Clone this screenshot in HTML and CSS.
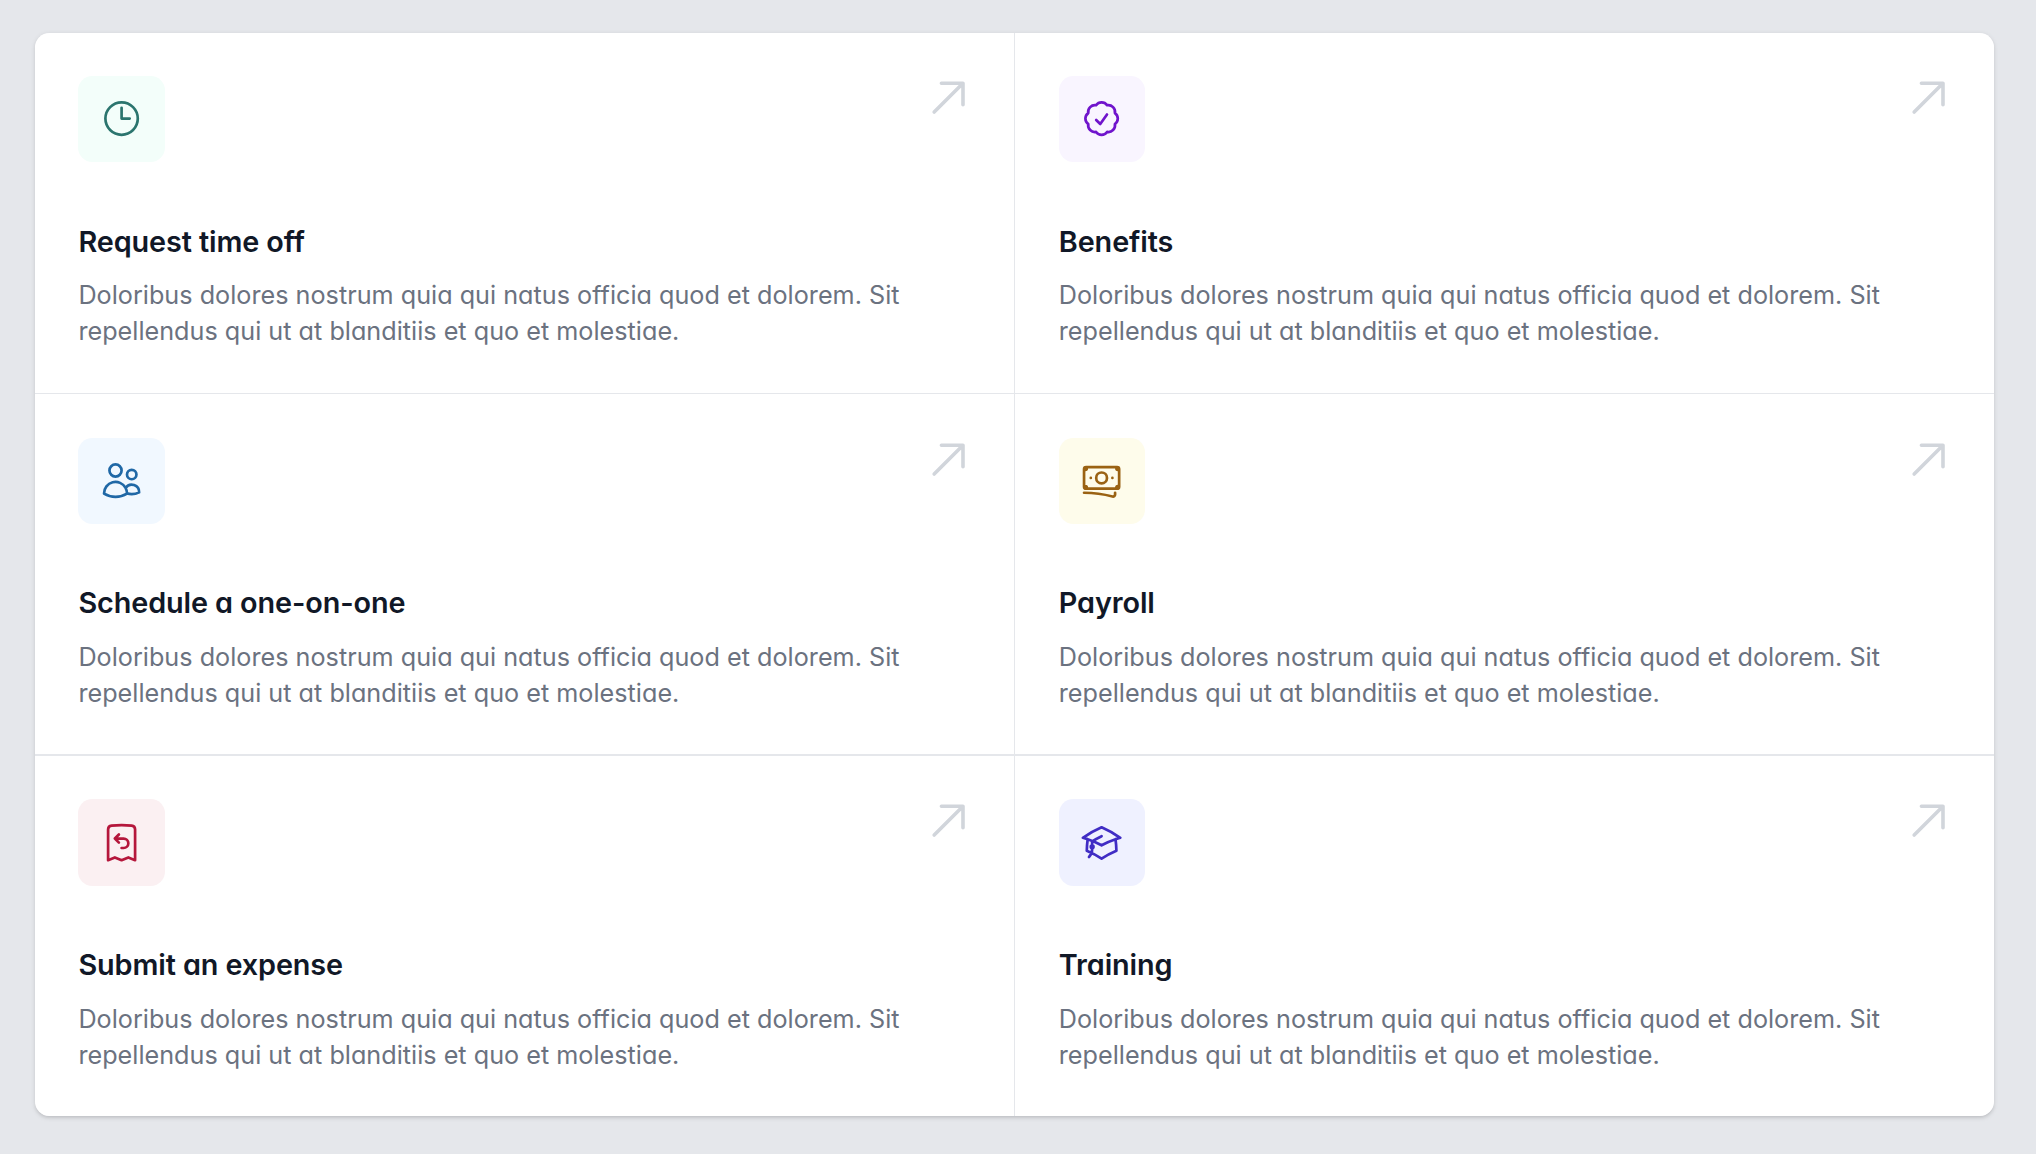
FILE: index.html
```html
<!DOCTYPE html>
<html lang="en">
<head>
<meta charset="utf-8">
<title>Quick actions</title>
<link rel="stylesheet" href="styles.css">
</head>
<body>
<svg width="0" height="0" class="sprite" aria-hidden="true">
  <symbol id="arrow" viewBox="0 0 24 24"><path d="M20 4h1a1 1 0 00-1-1v1zm-1 12a1 1 0 102 0h-2zM8 3a1 1 0 000 2V3zM3.293 19.293a1 1 0 101.414 1.414l-1.414-1.414zM19 4v12h2V4h-2zm1-1H8v2h12V3zm-.707.293l-16 16 1.414 1.414 16-16-1.414-1.414z"/></symbol>
</svg>
<main class="grid">
  <section class="card">
    <div class="top">
      <span class="badge teal"><svg class="icon" viewBox="0 0 24 24"><path d="M12 6v6h4.5m4.5 0a9 9 0 11-18 0 9 9 0 0118 0z"/></svg></span>
      <svg class="arrow"><use href="#arrow"/></svg>
    </div>
    <h3>Request time off</h3>
    <p>Doloribus dolores nostrum quia qui natus officia quod et dolorem. Sit repellendus qui ut at blanditiis et quo et molestiae.</p>
  </section>
  <section class="card">
    <div class="top">
      <span class="badge purple"><svg class="icon" viewBox="0 0 24 24"><path d="M9 12.75L11.25 15 15 9.75M21 12c0 1.268-.63 2.39-1.593 3.068a3.745 3.745 0 01-1.043 3.296 3.745 3.745 0 01-3.296 1.043A3.745 3.745 0 0112 21c-1.268 0-2.39-.63-3.068-1.593a3.746 3.746 0 01-3.296-1.043 3.745 3.745 0 01-1.043-3.296A3.745 3.745 0 013 12c0-1.268.63-2.39 1.593-3.068a3.745 3.745 0 011.043-3.296 3.746 3.746 0 013.296-1.043A3.746 3.746 0 0112 3c1.268 0 2.39.63 3.068 1.593a3.746 3.746 0 013.296 1.043 3.746 3.746 0 011.043 3.296A3.745 3.745 0 0121 12z"/></svg></span>
      <svg class="arrow"><use href="#arrow"/></svg>
    </div>
    <h3>Benefits</h3>
    <p>Doloribus dolores nostrum quia qui natus officia quod et dolorem. Sit repellendus qui ut at blanditiis et quo et molestiae.</p>
  </section>
  <section class="card">
    <div class="top">
      <span class="badge sky"><svg class="icon" viewBox="0 0 24 24"><path d="M15 19.128a9.38 9.38 0 002.625.372 9.337 9.337 0 004.121-.952 4.125 4.125 0 00-7.533-2.493M15 19.128v-.003c0-1.113-.285-2.16-.786-3.07M15 19.128v.106A12.318 12.318 0 018.624 21c-2.331 0-4.512-.645-6.374-1.766l-.001-.109a6.375 6.375 0 0111.964-3.07M12 6.375a3.375 3.375 0 11-6.75 0 3.375 3.375 0 016.75 0zm8.25 2.25a2.625 2.625 0 11-5.25 0 2.625 2.625 0 015.25 0z"/></svg></span>
      <svg class="arrow"><use href="#arrow"/></svg>
    </div>
    <h3>Schedule a one-on-one</h3>
    <p>Doloribus dolores nostrum quia qui natus officia quod et dolorem. Sit repellendus qui ut at blanditiis et quo et molestiae.</p>
  </section>
  <section class="card">
    <div class="top">
      <span class="badge yellow"><svg class="icon" viewBox="0 0 24 24"><path d="M2.25 18.75a60.07 60.07 0 0115.797 2.101c.727.198 1.453-.342 1.453-1.096V18.75M3.75 4.5v.75A.75.75 0 013 6h-.75m0 0v-.375c0-.621.504-1.125 1.125-1.125H20.25M2.25 6v9m18-10.5v.75c0 .414.336.75.75.75h.75m-1.5-1.5h.375c.621 0 1.125.504 1.125 1.125v9.75c0 .621-.504 1.125-1.125 1.125h-.375m1.5-1.5H21a.75.75 0 00-.75.75v.75m0 0H3.75m0 0h-.375a1.125 1.125 0 01-1.125-1.125V15m1.5 1.5v-.75A.75.75 0 003 15h-.75M15 10.5a3 3 0 11-6 0 3 3 0 016 0zm3 0h.008v.008H18V10.5zm-12 0h.008v.008H6V10.5z"/></svg></span>
      <svg class="arrow"><use href="#arrow"/></svg>
    </div>
    <h3>Payroll</h3>
    <p>Doloribus dolores nostrum quia qui natus officia quod et dolorem. Sit repellendus qui ut at blanditiis et quo et molestiae.</p>
  </section>
  <section class="card">
    <div class="top">
      <span class="badge rose"><svg class="icon" viewBox="0 0 24 24"><path d="M8.25 9.75h4.875a2.625 2.625 0 010 5.25H12M8.25 9.75L10.5 7.5M8.25 9.75L10.5 12m9-7.243V21.75l-3.75-1.5-3.75 1.5-3.75-1.5-3.75 1.5V4.757c0-1.108.806-2.057 1.907-2.185a48.507 48.507 0 0111.186 0c1.1.128 1.907 1.077 1.907 2.185z"/></svg></span>
      <svg class="arrow"><use href="#arrow"/></svg>
    </div>
    <h3>Submit an expense</h3>
    <p>Doloribus dolores nostrum quia qui natus officia quod et dolorem. Sit repellendus qui ut at blanditiis et quo et molestiae.</p>
  </section>
  <section class="card">
    <div class="top">
      <span class="badge indigo"><svg class="icon" viewBox="0 0 24 24"><path d="M4.26 10.147a60.436 60.436 0 00-.491 6.347A48.627 48.627 0 0112 20.904a48.627 48.627 0 018.232-4.41 60.46 60.46 0 00-.491-6.347m-15.482 0a50.57 50.57 0 00-2.658-.813A59.905 59.905 0 0112 3.493a59.902 59.902 0 0110.399 5.84c-.896.248-1.783.52-2.658.814m-15.482 0A50.697 50.697 0 0112 13.489a50.702 50.702 0 017.74-3.342M6.75 15a.75.75 0 100-1.5.75.75 0 000 1.5zm0 0v-3.675A55.378 55.378 0 0112 8.443m-7.007 11.55A5.981 5.981 0 006.75 15.75v-3.75"/></svg></span>
      <svg class="arrow"><use href="#arrow"/></svg>
    </div>
    <h3>Training</h3>
    <p>Doloribus dolores nostrum quia qui natus officia quod et dolorem. Sit repellendus qui ut at blanditiis et quo et molestiae.</p>
  </section>
</main>
</body>
</html>
```
FILE: styles.css
```css
* { box-sizing: border-box; }
body {
  margin: 0;
  padding: 33px 42px 37px 35px;
  background: #e5e7eb;
  font-family: Inter, "Liberation Sans", sans-serif;
  font-feature-settings: "cv11";
}
.sprite { display: none; }
.grid {
  display: grid;
  grid-template-columns: 979px 979px;
  grid-template-rows: 361px 362px 360px;
  column-gap: 1px;
  width: 1959px;
  background: #e5e7eb;
  border-radius: 14.4px;
  overflow: hidden;
  box-shadow: 0 1.8px 5.4px rgba(0, 0, 0, .1), 0 1.8px 3.6px -1.8px rgba(0, 0, 0, .1);
}
.card {
  padding: 43.2px 43.6px 0 43.4px;
  background: #fff;
}
.card:nth-child(even) { padding-left: 43.8px; }
.card:nth-child(-n+2) {
  padding-top: 42.6px;
  border-bottom: 1px solid #e5e7eb;
}
.card:nth-child(3), .card:nth-child(4) {
  padding-top: 43.7px;
  border-bottom: 2px solid #e5e7eb;
}
.card:nth-child(3) h3, .card:nth-child(4) h3 {
  margin-top: 56.8px;
  margin-bottom: 15.2px;
}
.top {
  display: flex;
  justify-content: space-between;
  align-items: flex-start;
}
.badge {
  display: flex;
  padding: 21.6px;
  border-radius: 14.4px;
}
.icon, .arrow { width: 43.2px; height: 43.2px; }
.icon {
  fill: none;
  stroke: currentColor;
  stroke-width: 1.5;
  stroke-linecap: round;
  stroke-linejoin: round;
}
.arrow { fill: #d1d5db; }
.teal { background: #f3fefa; color: #2b756e; }
.purple { background: #f9f5ff; color: #7014cc; }
.sky { background: #f1f8ff; color: #2068a6; }
.yellow { background: #fefceb; color: #9a6213; }
.rose { background: #fbf0f2; color: #b5173c; }
.indigo { background: #eff1ff; color: #402dc4; }
h3 {
  margin: 57.6px 0 14.4px;
  font-size: 28.8px;
  line-height: 43.2px;
  font-weight: 600;
  letter-spacing: -.1px;
  color: #111827;
}
p {
  margin: 0;
  font-size: 25.2px;
  line-height: 36px;
  letter-spacing: .01px;
  color: #6b7280;
}
```
